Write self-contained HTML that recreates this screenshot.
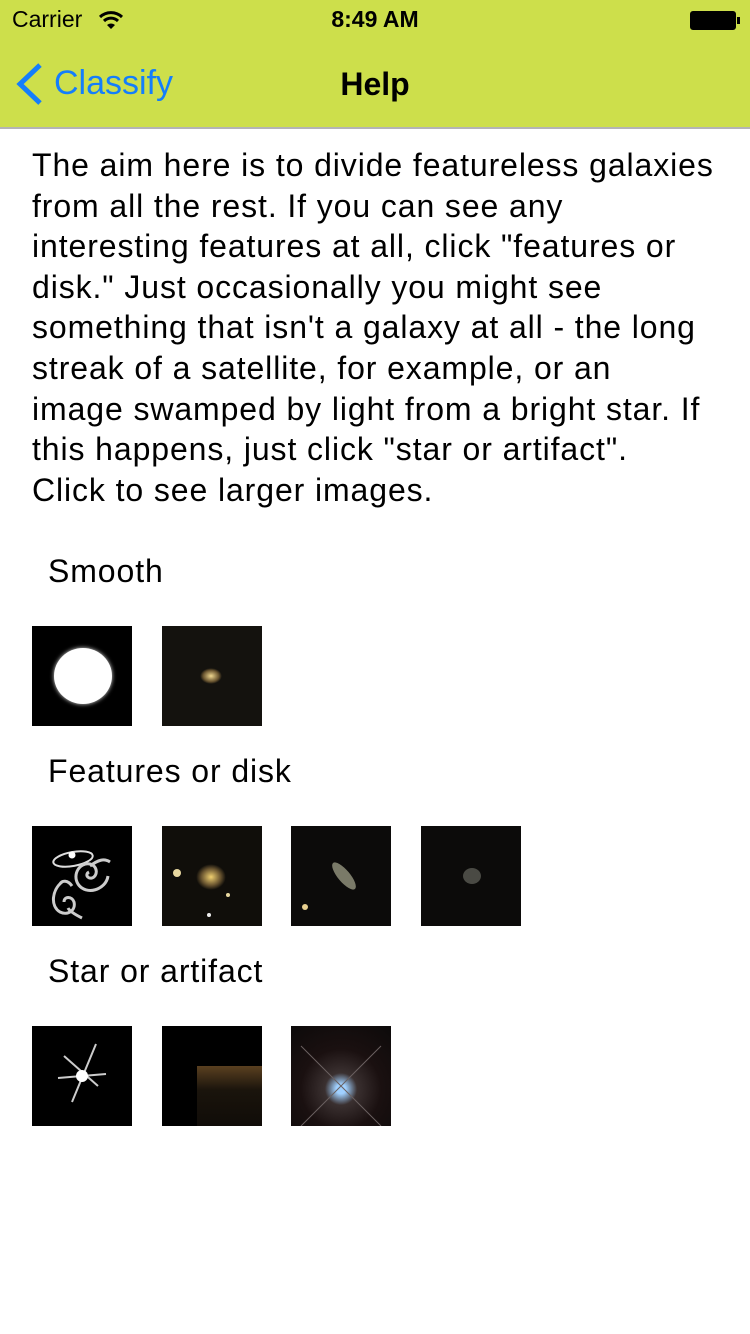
<!DOCTYPE html><html><head><meta charset="utf-8"><style>
*{margin:0;padding:0;box-sizing:border-box}
body{width:750px;height:1334px;background:#fff;font-family:"Liberation Sans",sans-serif;position:relative;overflow:hidden}
.bar{position:absolute;left:0;top:0;width:750px;height:129px;background:#cddf4b;border-bottom:2px solid #b4b4b4}
.abs{position:absolute}
p{position:absolute;left:32px;top:145px;width:718px;font-size:32px;letter-spacing:0.9px;line-height:40.6px;color:#000;white-space:nowrap}
h2{position:absolute;left:48px;font-size:32px;letter-spacing:0.9px;font-weight:normal;color:#000}
.t{position:absolute;width:100px;height:100px;background:#000;overflow:hidden}
</style></head><body>
<div class="bar">
<div class="abs" style="left:12px;top:6px;font-size:23px">Carrier</div>
<svg class="abs" style="left:98px;top:10px" width="26" height="20" viewBox="0 0 26 20"><path d="M2 7a16 16 0 0 1 22 0" stroke="#000" stroke-width="3" fill="none"/><path d="M6 11a10 10 0 0 1 14 0" stroke="#000" stroke-width="3" fill="none"/><path d="M13 19l-4-4a6 6 0 0 1 8 0z" fill="#000"/></svg>
<div class="abs" style="left:0;width:750px;text-align:center;top:6px;font-size:23px;font-weight:bold">8:49 AM</div>
<div class="abs" style="left:690px;top:11px;width:46px;height:19px;border:2px solid #000;border-radius:3px;background:#000"></div>
<div class="abs" style="left:737px;top:17px;width:3px;height:7px;background:#000"></div>
<svg class="abs" style="left:14px;top:62px" width="30" height="44" viewBox="0 0 30 44"><path d="M26 3L6 22l20 19" stroke="#147efb" stroke-width="5" fill="none"/></svg>
<div class="abs" style="left:54px;top:64px;font-size:34px;color:#147efb">Classify</div>
<div class="abs" style="left:0;width:750px;text-align:center;top:66px;font-size:32px;font-weight:bold">Help</div>
</div>
<p>The aim here is to divide featureless galaxies<br>from all the rest. If you can see any<br>interesting features at all, click "features or<br>disk." Just occasionally you might see<br>something that isn't a galaxy at all - the long<br>streak of a satellite, for example, or an<br>image swamped by light from a bright star. If<br>this happens, just click "star or artifact".<br>Click to see larger images.</p>
<h2 style="top:553px">Smooth</h2>
<h2 style="top:753px">Features or disk</h2>
<h2 style="top:953px">Star or artifact</h2>
<div class="t" style="left:32px;top:626px"><div class="abs" style="left:22px;top:22px;width:58px;height:56px;border-radius:50%;background:#fff;box-shadow:0 0 4px #ddd"></div></div>
<div class="t" style="left:162px;top:626px;background:#14120e"><div class="abs" style="left:38px;top:42px;width:22px;height:16px;border-radius:50%;background:radial-gradient(#f0d890,#6a5530 50%,transparent 70%)"></div></div>
<div class="t" style="left:32px;top:826px"><svg width="100" height="100"><ellipse cx="41" cy="33" rx="20" ry="7" fill="none" stroke="#ddd" stroke-width="2" transform="rotate(-10 41 33)"/><circle cx="40" cy="29" r="3.5" fill="#fff"/><path d="M76 50c-2 14-22 20-30 8c-6-10 2-22 12-20c8 2 8 12 2 14c-5 1-7-4-3-6M58 40c8-6 14-8 20-4" fill="none" stroke="#ccc" stroke-width="3"/><path d="M30 56c-10 8-12 24-2 30c8 4 16-2 14-10c-2-6-10-6-10 0M40 60c-4-6-10-6-12-2M36 82c2 4 10 8 14 10" fill="none" stroke="#ccc" stroke-width="3"/></svg></div>
<div class="t" style="left:162px;top:826px;background:#100e0a"><div class="abs" style="left:34px;top:38px;width:30px;height:26px;border-radius:50%;background:radial-gradient(#f0d070,#6a5530 45%,transparent 70%)"></div><div class="abs" style="left:11px;top:43px;width:8px;height:8px;border-radius:50%;background:#e8d8a0"></div><div class="abs" style="left:64px;top:67px;width:4px;height:4px;border-radius:50%;background:#e8d8a0"></div><div class="abs" style="left:45px;top:87px;width:4px;height:4px;border-radius:50%;background:#eee"></div></div>
<div class="t" style="left:291px;top:826px;background:#0c0b0a"><div class="abs" style="left:36px;top:44px;width:34px;height:12px;border-radius:50%;background:#7a7a68;transform:rotate(50deg)"></div><div class="abs" style="left:11px;top:78px;width:6px;height:6px;border-radius:50%;background:#e8d090"></div></div>
<div class="t" style="left:421px;top:826px;background:#0c0b0a"><div class="abs" style="left:42px;top:42px;width:18px;height:16px;border-radius:50%;background:#4a4a44"></div></div>
<div class="t" style="left:32px;top:1026px"><svg width="100" height="100"><path d="M64 18L40 76M32 30L66 60M26 52L74 48" stroke="#ccc" stroke-width="2"/><circle cx="50" cy="50" r="6" fill="#fff"/></svg></div>
<div class="t" style="left:162px;top:1026px"><div class="abs" style="left:35px;top:40px;width:65px;height:60px;background:linear-gradient(#5a4020,#1a140c 40%,#100c08)"></div></div>
<div class="t" style="left:291px;top:1026px;background:radial-gradient(circle at 50% 63%,#a0d0ff 6%,#3a3030 20%,#1a1010 50%,#0c0a0a)"><svg width="100" height="100" class="abs"><path d="M10 20L90 100M90 20L10 100" stroke="#6a6060" stroke-width="1"/></svg></div>
</body></html>
